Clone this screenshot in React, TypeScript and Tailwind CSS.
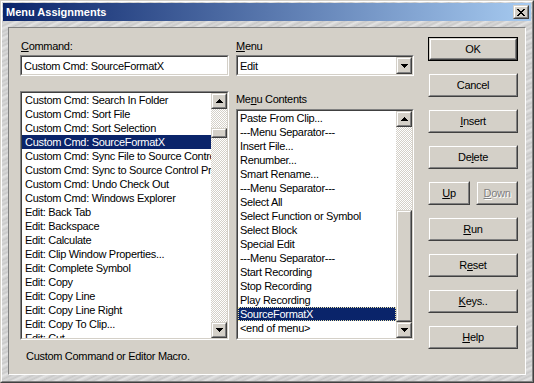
import React from "react";

const cmdItems = [
  "Custom Cmd: Search In Folder",
  "Custom Cmd: Sort File",
  "Custom Cmd: Sort Selection",
  "Custom Cmd: SourceFormatX",
  "Custom Cmd: Sync File to Source Control",
  "Custom Cmd: Sync to Source Control Project",
  "Custom Cmd: Undo Check Out",
  "Custom Cmd: Windows Explorer",
  "Edit: Back Tab",
  "Edit: Backspace",
  "Edit: Calculate",
  "Edit: Clip Window Properties...",
  "Edit: Complete Symbol",
  "Edit: Copy",
  "Edit: Copy Line",
  "Edit: Copy Line Right",
  "Edit: Copy To Clip...",
  "Edit: Cut",
];

const menuItems = [
  "Paste From Clip...",
  "---Menu Separator---",
  "Insert File...",
  "Renumber...",
  "Smart Rename...",
  "---Menu Separator---",
  "Select All",
  "Select Function or Symbol",
  "Select Block",
  "Special Edit",
  "---Menu Separator---",
  "Start Recording",
  "Stop Recording",
  "Play Recording",
  "SourceFormatX",
  "<end of menu>",
];

function ArrowUp() {
  return (
    <svg width="7" height="4" viewBox="0 0 7 4" shapeRendering="crispEdges">
      <rect x="3" y="0" width="1" height="1" fill="#000" />
      <rect x="2" y="1" width="3" height="1" fill="#000" />
      <rect x="1" y="2" width="5" height="1" fill="#000" />
      <rect x="0" y="3" width="7" height="1" fill="#000" />
    </svg>
  );
}

function ArrowDown() {
  return (
    <svg width="7" height="4" viewBox="0 0 7 4" shapeRendering="crispEdges">
      <rect x="0" y="0" width="7" height="1" fill="#000" />
      <rect x="1" y="1" width="5" height="1" fill="#000" />
      <rect x="2" y="2" width="3" height="1" fill="#000" />
      <rect x="3" y="3" width="1" height="1" fill="#000" />
    </svg>
  );
}

function RaisedBox({ className, children }: { className: string; children?: React.ReactNode }) {
  return (
    <div className={`${className} border border-t-[#d4d0c8] border-l-[#d4d0c8] border-r-[#404040] border-b-[#404040] bg-[#d4d0c8]`}>
      <div className="w-full h-full border border-t-white border-l-white border-r-[#808080] border-b-[#808080] flex items-center justify-center">
        {children}
      </div>
    </div>
  );
}

function Sunken({ className, children }: { className: string; children?: React.ReactNode }) {
  return (
    <div className={`${className} border border-t-[#808080] border-l-[#808080] border-r-white border-b-white`}>
      <div className="w-full h-full border border-t-[#404040] border-l-[#404040] border-r-[#d4d0c8] border-b-[#d4d0c8] bg-white flex overflow-hidden">
        {children}
      </div>
    </div>
  );
}

function Checker({ className }: { className: string }) {
  return (
    <div className={`${className} bg-[conic-gradient(#ffffff_25%,#d4d0c8_0_50%,#ffffff_0_75%,#d4d0c8_0)] bg-[length:2px_2px]`} />
  );
}

function Button({ children, isDefault }: { children: React.ReactNode; isDefault?: boolean }) {
  if (isDefault) {
    return (
      <div className="w-[90px] h-[24px] border border-black">
        <RaisedBox className="w-full h-full">{children}</RaisedBox>
      </div>
    );
  }
  return <RaisedBox className="w-[90px] h-[24px]">{children}</RaisedBox>;
}

export default function App() {
  return (
    <div className="w-[534px] h-[383px] border border-t-[#d4d0c8] border-l-[#d4d0c8] border-r-[#404040] border-b-[#404040] font-['Liberation_Sans',Arial,sans-serif] text-[11px] leading-[14px] text-black select-none">
      <div className="w-full h-full border border-t-white border-l-white border-r-[#808080] border-b-[#808080] p-px flex flex-col bg-[#cfcfcf] bg-[repeating-linear-gradient(155deg,#c6c6c6_0px,#d8d8d8_2px,#c9c9c9_4px,#e4e4e4_6px,#cbcbcb_9px)]">
        {/* Title bar */}
        <div className="h-[18px] shrink-0 flex items-center justify-between pl-[3px] pr-[2px] bg-[linear-gradient(to_right,#0a246a,#a6caf0)]">
          <span className="text-white font-bold text-[11px] leading-[13px]">Menu Assignments</span>
          <RaisedBox className="w-[16px] h-[14px]">
            <svg width="8" height="7" viewBox="0 0 8 7" shapeRendering="crispEdges">
              <rect x="0" y="0" width="2" height="1" fill="#000" />
              <rect x="6" y="0" width="2" height="1" fill="#000" />
              <rect x="1" y="1" width="2" height="1" fill="#000" />
              <rect x="5" y="1" width="2" height="1" fill="#000" />
              <rect x="2" y="2" width="4" height="1" fill="#000" />
              <rect x="3" y="3" width="2" height="1" fill="#000" />
              <rect x="2" y="4" width="4" height="1" fill="#000" />
              <rect x="1" y="5" width="2" height="1" fill="#000" />
              <rect x="5" y="5" width="2" height="1" fill="#000" />
              <rect x="0" y="6" width="2" height="1" fill="#000" />
              <rect x="6" y="6" width="2" height="1" fill="#000" />
            </svg>
          </RaisedBox>
        </div>

        {/* Panel */}
        <div className="mt-[6px] mx-[5px] mb-[5px] flex-1 border border-t-[#808080] border-l-[#808080] border-r-white border-b-white bg-[#d4d0c8] flex pl-[11px] tracking-[-0.3px]">
          {/* Left column */}
          <div className="w-[209px] flex flex-col pt-[11px]">
            <div className="h-[14px] pl-px"><span className="underline">C</span>ommand:</div>
            <Sunken className="mt-[2px] w-[209px] h-[21px]">
              <div className="pl-[2px] self-center whitespace-nowrap">Custom Cmd: SourceFormatX</div>
            </Sunken>
            <Sunken className="mt-[15px] w-[209px] h-[249px]">
              <div className="flex-1 flex flex-col overflow-hidden">
                {cmdItems.map((t, i) => (
                  <div
                    key={i}
                    className={`h-[14px] shrink-0 pl-[3px] whitespace-nowrap overflow-hidden ${i === 3 ? "bg-[#0a246a] text-white" : ""}`}
                  >
                    {t}
                  </div>
                ))}
              </div>
              <div className="w-[16px] flex flex-col shrink-0">
                <RaisedBox className="w-[16px] h-[16px] shrink-0"><ArrowUp /></RaisedBox>
                <Checker className="h-[19px] shrink-0" />
                <RaisedBox className="w-[16px] h-[10px] shrink-0" />
                <Checker className="flex-1" />
                <RaisedBox className="w-[16px] h-[16px] shrink-0"><ArrowDown /></RaisedBox>
              </div>
            </Sunken>
            <div className="mt-[9px] pl-[6px] whitespace-nowrap">Custom Command or Editor Macro.</div>
          </div>

          {/* Middle column */}
          <div className="w-[178px] ml-[7px] flex flex-col pt-[11px]">
            <div className="h-[14px]"><span className="underline">M</span>enu</div>
            <Sunken className="mt-[2px] w-[178px] h-[21px]">
              <div className="flex-1 pl-[2px] self-center">Edit</div>
              <RaisedBox className="w-[16px] h-[17px] shrink-0"><ArrowDown /></RaisedBox>
            </Sunken>
            <div className="mt-[16px] h-[14px]">Me<span className="underline">n</span>u Contents</div>
            <Sunken className="mt-[3px] w-[178px] h-[231px]">
              <div className="flex-1 flex flex-col overflow-hidden">
                {menuItems.map((t, i) => (
                  <div
                    key={i}
                    className={`h-[14px] shrink-0 whitespace-nowrap overflow-hidden ${i === 14 ? "bg-[#0a246a] text-white border border-dotted border-[#e8e2a8] pl-[1px] leading-[12px]" : "pl-[2px]"}`}
                  >
                    {t}
                  </div>
                ))}
              </div>
              <div className="w-[16px] flex flex-col shrink-0">
                <RaisedBox className="w-[16px] h-[16px] shrink-0"><ArrowUp /></RaisedBox>
                <Checker className="h-[83px] shrink-0" />
                <RaisedBox className="w-[16px] flex-1" />
                <RaisedBox className="w-[16px] h-[16px] shrink-0"><ArrowDown /></RaisedBox>
              </div>
            </Sunken>
          </div>

          {/* Buttons column */}
          <div className="w-[90px] ml-[14px] flex flex-col gap-[12px] pt-[9px]">
            <Button isDefault>OK</Button>
            <Button>Cancel</Button>
            <Button><span><span className="underline">I</span>nsert</span></Button>
            <Button><span>De<span className="underline">l</span>ete</span></Button>
            <div className="flex justify-between">
              <RaisedBox className="w-[42px] h-[24px]"><span><span className="underline">U</span>p</span></RaisedBox>
              <RaisedBox className="w-[42px] h-[24px]">
                <span className="text-[#808080] [text-shadow:1px_1px_0_#ffffff]"><span className="underline">D</span>own</span>
              </RaisedBox>
            </div>
            <Button><span><span className="underline">R</span>un</span></Button>
            <Button><span>R<span className="underline">e</span>set</span></Button>
            <Button><span><span className="underline">K</span>eys..</span></Button>
            <Button><span><span className="underline">H</span>elp</span></Button>
          </div>
        </div>
      </div>
    </div>
  );
}
